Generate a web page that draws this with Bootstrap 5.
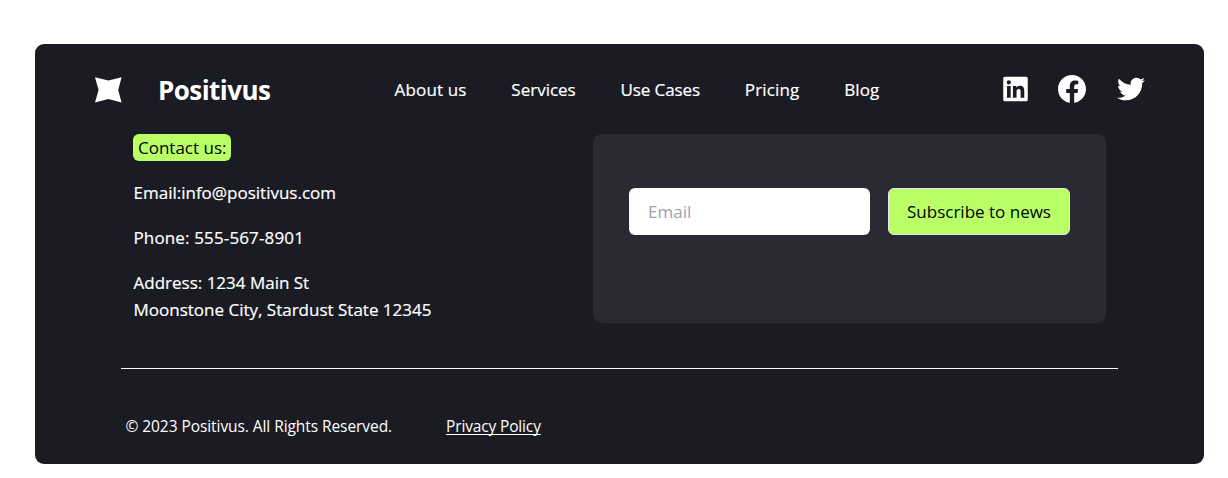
<!DOCTYPE html>
<html lang="en">
<head>
<meta charset="utf-8">
<meta name="viewport" content="width=device-width, initial-scale=1">
<title>Positivus</title>
<link href="https://cdn.jsdelivr.net/npm/bootstrap@5.3.0/dist/css/bootstrap.min.css" rel="stylesheet">
<style>
body{font-family:"Open Sans","Noto Sans",sans-serif;font-size:17px;line-height:27px;background:#fff}
.site-footer{margin:44px 24px 0 35px;height:420px;background:#1b1b24;border-radius:9px;color:#fff}
.top-bar{height:90px;padding-left:60px;padding-right:59px}
.star{width:27px;height:26px;display:block;margin-top:1px}
.brand-name{font-size:26px;font-weight:700;letter-spacing:-.55px;margin-left:36px;padding-top:2px;width:236.6px}
.nav-links{gap:44.8px}
.nav-links a{color:#fff;-webkit-text-stroke:.2px #fff}
.sp-wide{letter-spacing:.14px}
.sp-tight{letter-spacing:-.1px}
.social{gap:30px}
.social svg{display:block;height:28px;fill:#fff}
.social svg:last-child{margin-left:1px}
.contact-row{padding-left:98px;padding-right:98px}
.contact-list{gap:18px}
.contact-list p{padding-left:.5px;-webkit-text-stroke:.2px #fff}
.tag{background:#b9ff66;color:#000;border-radius:6px;padding:0 5px}
.news-box{width:513px;height:189px;background:#2a2a32;border-radius:9px;padding:54px 36px;gap:18px}
.news-box .form-control{width:241px;height:47px;border:0;border-radius:6px;padding:0 19px;font-size:17px}
.news-box .form-control::placeholder{color:#9ca3af}
.news-box .btn{width:182px;height:47px;background:#b9ff66;border:1px solid #e5e7eb;border-radius:6px;padding:0;font-size:17px;color:#000}
.rule{height:1px;background:#fff;margin:45px 86px 0}
.legal{font-size:15.5px;padding:44px 91px 0 90.5px;gap:54px}
.legal span{letter-spacing:-.07px}
.legal a{color:#fff;letter-spacing:-.15px;text-underline-offset:2px;text-decoration-thickness:1px;text-decoration-skip-ink:none}
</style>
</head>
<body>
<footer class="site-footer">
  <div class="top-bar d-flex align-items-center">
    <svg class="star" viewBox="0 0 27 26"><path fill="#fff" d="M0 .2 13.4 3.6 26.6.2 23.2 13 26.6 25.6 13.4 22 0 25.6 3.6 13Z"/></svg>
    <span class="brand-name">Positivus</span>
    <nav class="nav-links d-flex">
      <a class="text-decoration-none sp-wide">About us</a>
      <a class="text-decoration-none">Services</a>
      <a class="text-decoration-none sp-tight">Use Cases</a>
      <a class="text-decoration-none sp-wide">Pricing</a>
      <a class="text-decoration-none sp-wide">Blog</a>
    </nav>
    <div class="social d-flex align-items-center ms-auto">
      <svg width="25" viewBox="0 0 448 512"><path d="M416 32H31.9C14.3 32 0 46.5 0 64.3v383.4C0 465.5 14.3 480 31.9 480H416c17.6 0 32-14.5 32-32.3V64.3c0-17.8-14.4-32.3-32-32.3zM135.4 416H69V202.2h66.5V416zm-33.2-243c-21.3 0-38.5-17.3-38.5-38.5S80.9 96 102.2 96c21.2 0 38.5 17.3 38.5 38.5 0 21.3-17.2 38.5-38.5 38.5zm282.1 243h-66.4V312c0-24.8-.5-56.7-34.5-56.7-34.6 0-39.9 27-39.9 54.9V416h-66.4V202.2h63.7v29.2h.9c8.9-16.8 30.6-34.5 62.9-34.5 67.2 0 79.7 44.3 79.7 101.9V416z"/></svg>
      <svg width="28" viewBox="8 8 496 496"><path d="M504 256C504 119 393 8 256 8S8 119 8 256c0 123.78 90.69 226.38 209.25 245V327.69h-63V256h63v-54.64c0-62.15 37-96.48 93.67-96.48 27.14 0 55.52 4.84 55.52 4.84v61h-31.28c-30.8 0-40.41 19.12-40.41 38.73V256h68.78l-11 71.69h-57.78V501C413.31 482.38 504 379.78 504 256z"/></svg>
      <svg width="28" viewBox="0 0 512 512"><path d="M459.37 151.716c.325 4.548.325 9.097.325 13.645 0 138.72-105.583 298.558-298.558 298.558-59.452 0-114.68-17.219-161.137-47.106 8.447.974 16.568 1.299 25.34 1.299 49.055 0 94.213-16.568 130.274-44.832-46.132-.975-84.792-31.188-98.112-72.772 6.498.974 12.995 1.624 19.818 1.624 9.421 0 18.843-1.3 27.614-3.573-48.081-9.747-84.143-51.98-84.143-102.985v-1.299c13.969 7.797 30.214 12.67 47.431 13.319-28.264-18.843-46.781-51.005-46.781-87.391 0-19.492 5.197-37.36 14.294-52.954 51.655 63.675 129.3 105.258 216.365 109.807-1.624-7.797-2.599-15.918-2.599-24.04 0-57.828 46.782-104.934 104.934-104.934 30.213 0 57.502 12.67 76.67 33.137 23.715-4.548 46.456-13.32 66.599-25.34-7.798 24.366-24.366 44.833-46.132 57.827 21.117-2.273 41.584-8.122 60.426-16.243-14.292 20.791-32.161 39.308-52.628 54.253z"/></svg>
    </div>
  </div>
  <div class="contact-row d-flex justify-content-between">
    <div class="contact-list d-flex flex-column align-items-start">
      <span class="tag">Contact us:</span>
      <p class="mb-0">Email:info@positivus.com</p>
      <p class="mb-0 sp-wide">Phone: 555-567-8901</p>
      <p class="mb-0">Address: 1234 Main St<br>Moonstone City, Stardust State 12345</p>
    </div>
    <form class="news-box d-flex">
      <input type="email" class="form-control" placeholder="Email">
      <button type="button" class="btn">Subscribe to news</button>
    </form>
  </div>
  <div class="rule"></div>
  <div class="legal d-flex">
    <span>© 2023 Positivus. All Rights Reserved.</span>
    <a class="text-decoration-underline">Privacy Policy</a>
  </div>
</footer>
<script src="https://cdn.jsdelivr.net/npm/bootstrap@5.3.0/dist/js/bootstrap.bundle.min.js"></script>
</body>
</html>
